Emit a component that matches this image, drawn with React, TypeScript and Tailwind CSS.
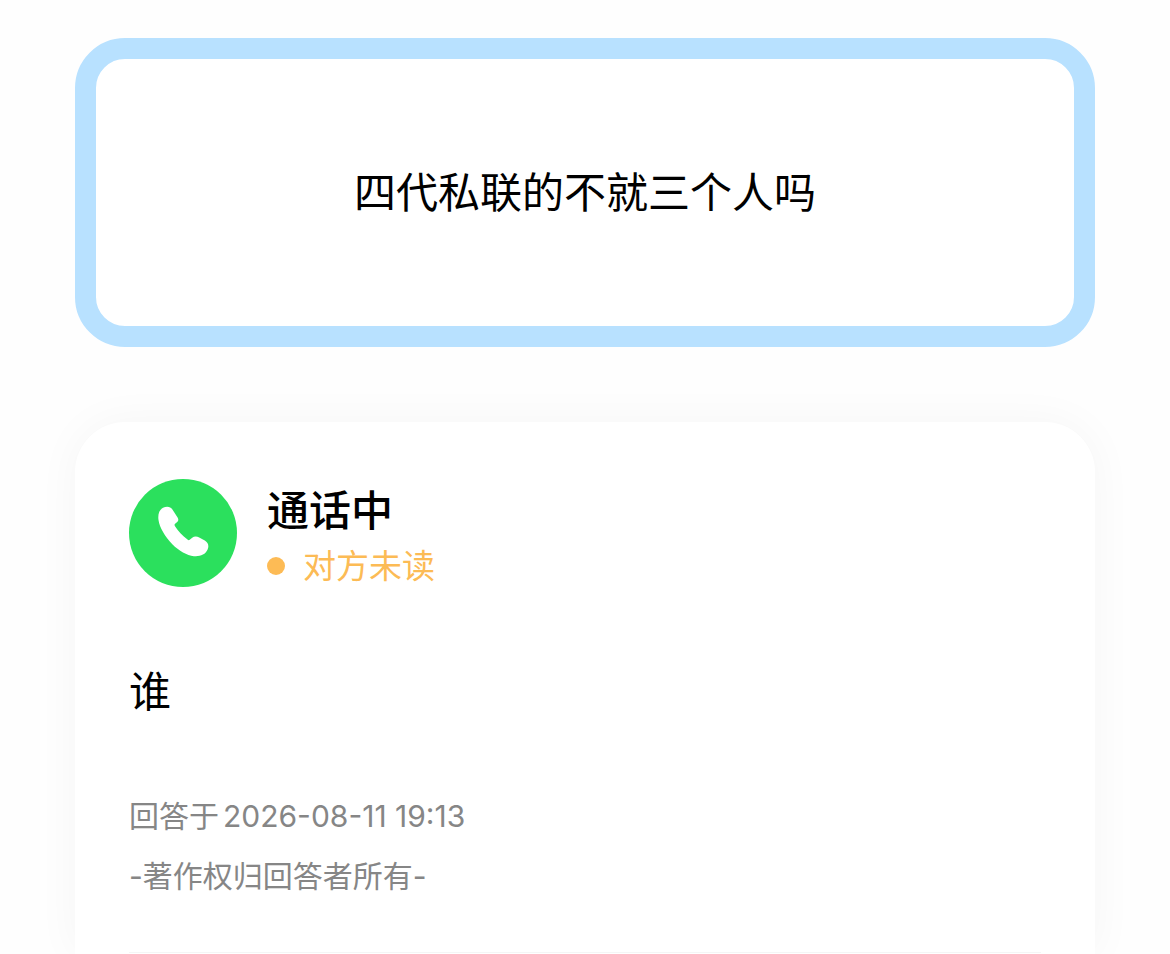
import type { ReactNode } from 'react';

const answer = {
  question: '四代私联的不就三个人吗',
  author: '通话中',
  status: '对方未读',
  content: '谁',
  date: '2026-08-11 19:13',
  copyright: '-著作权归回答者所有-',
};

function PhoneAvatar() {
  return (
    <svg viewBox="0 0 108 108" className="size-[108px] shrink-0" role="img" aria-label={answer.author}>
      <circle cx="54" cy="54" r="54" fill="#2be05d" />
      <path
        fill="#fff"
        d="M34 28.8C37.5 27 41.5 27.4 43.4 30.4L48.6 38.6C49.8 40.6 49.4 42 47.9 43.3L46.1 44.8C45.3 45.5 45.4 46.3 46 47.2C49 52 53.4 56.6 58.5 60.6C59.4 61.3 60.2 61.3 61 60.6L63.2 58.8C65.2 57.2 67.8 57.2 70.2 58.5L75.8 61.6C79.2 63.6 80.2 66.9 78.6 70.6C76.4 75.8 70.8 77.8 64.8 77.2C58 76.3 50 71.9 43.3 65.2C36 57.7 30.6 48.5 29.5 41C28.8 36 29.8 31 34 28.8Z"
      />
    </svg>
  );
}

function QuestionCard({ children }: { children: ReactNode }) {
  return (
    <section className="flex min-h-[309px] items-center justify-center rounded-[50px] border-[21px] border-[#b8e1ff] bg-white">
      <h1 className="text-[42px] leading-[60px]">{children}</h1>
    </section>
  );
}

export default function App() {
  return (
    <main className="flex min-h-screen flex-col overflow-hidden bg-[#fefefe] px-[75px] pt-[38px] font-['Inter','Noto_Sans_CJK_SC',sans-serif] text-black">
      <QuestionCard>{answer.question}</QuestionCard>

      <article className="mt-[75px] flex-1 rounded-t-[50px] bg-white px-[54px] pt-[57px] shadow-[0_0_45px_rgba(0,0,0,0.04)]">
        <header className="flex items-start gap-[30px]">
          <PhoneAvatar />
          <div>
            <h2 className="text-[42px] leading-[64px] font-medium">{answer.author}</h2>
            <p className="flex items-center gap-[18px] text-[33px] leading-[46px] text-[#fcbb55]">
              <span className="size-[18px] rounded-full bg-[#fdbb55]" />
              {answer.status}
            </p>
          </div>
        </header>

        <p className="mt-[73px] text-[42px] leading-[60px]">{answer.content}</p>

        <footer className="mt-16 border-b border-[#f5f5f5] pb-[46px] text-[30px] leading-[60px] text-[#868686]">
          <p className="flex gap-1">
            <span>回答于</span>
            <time dateTime="2026-08-11T19:13">{answer.date}</time>
          </p>
          <p>{answer.copyright}</p>
        </footer>
      </article>
    </main>
  );
}
